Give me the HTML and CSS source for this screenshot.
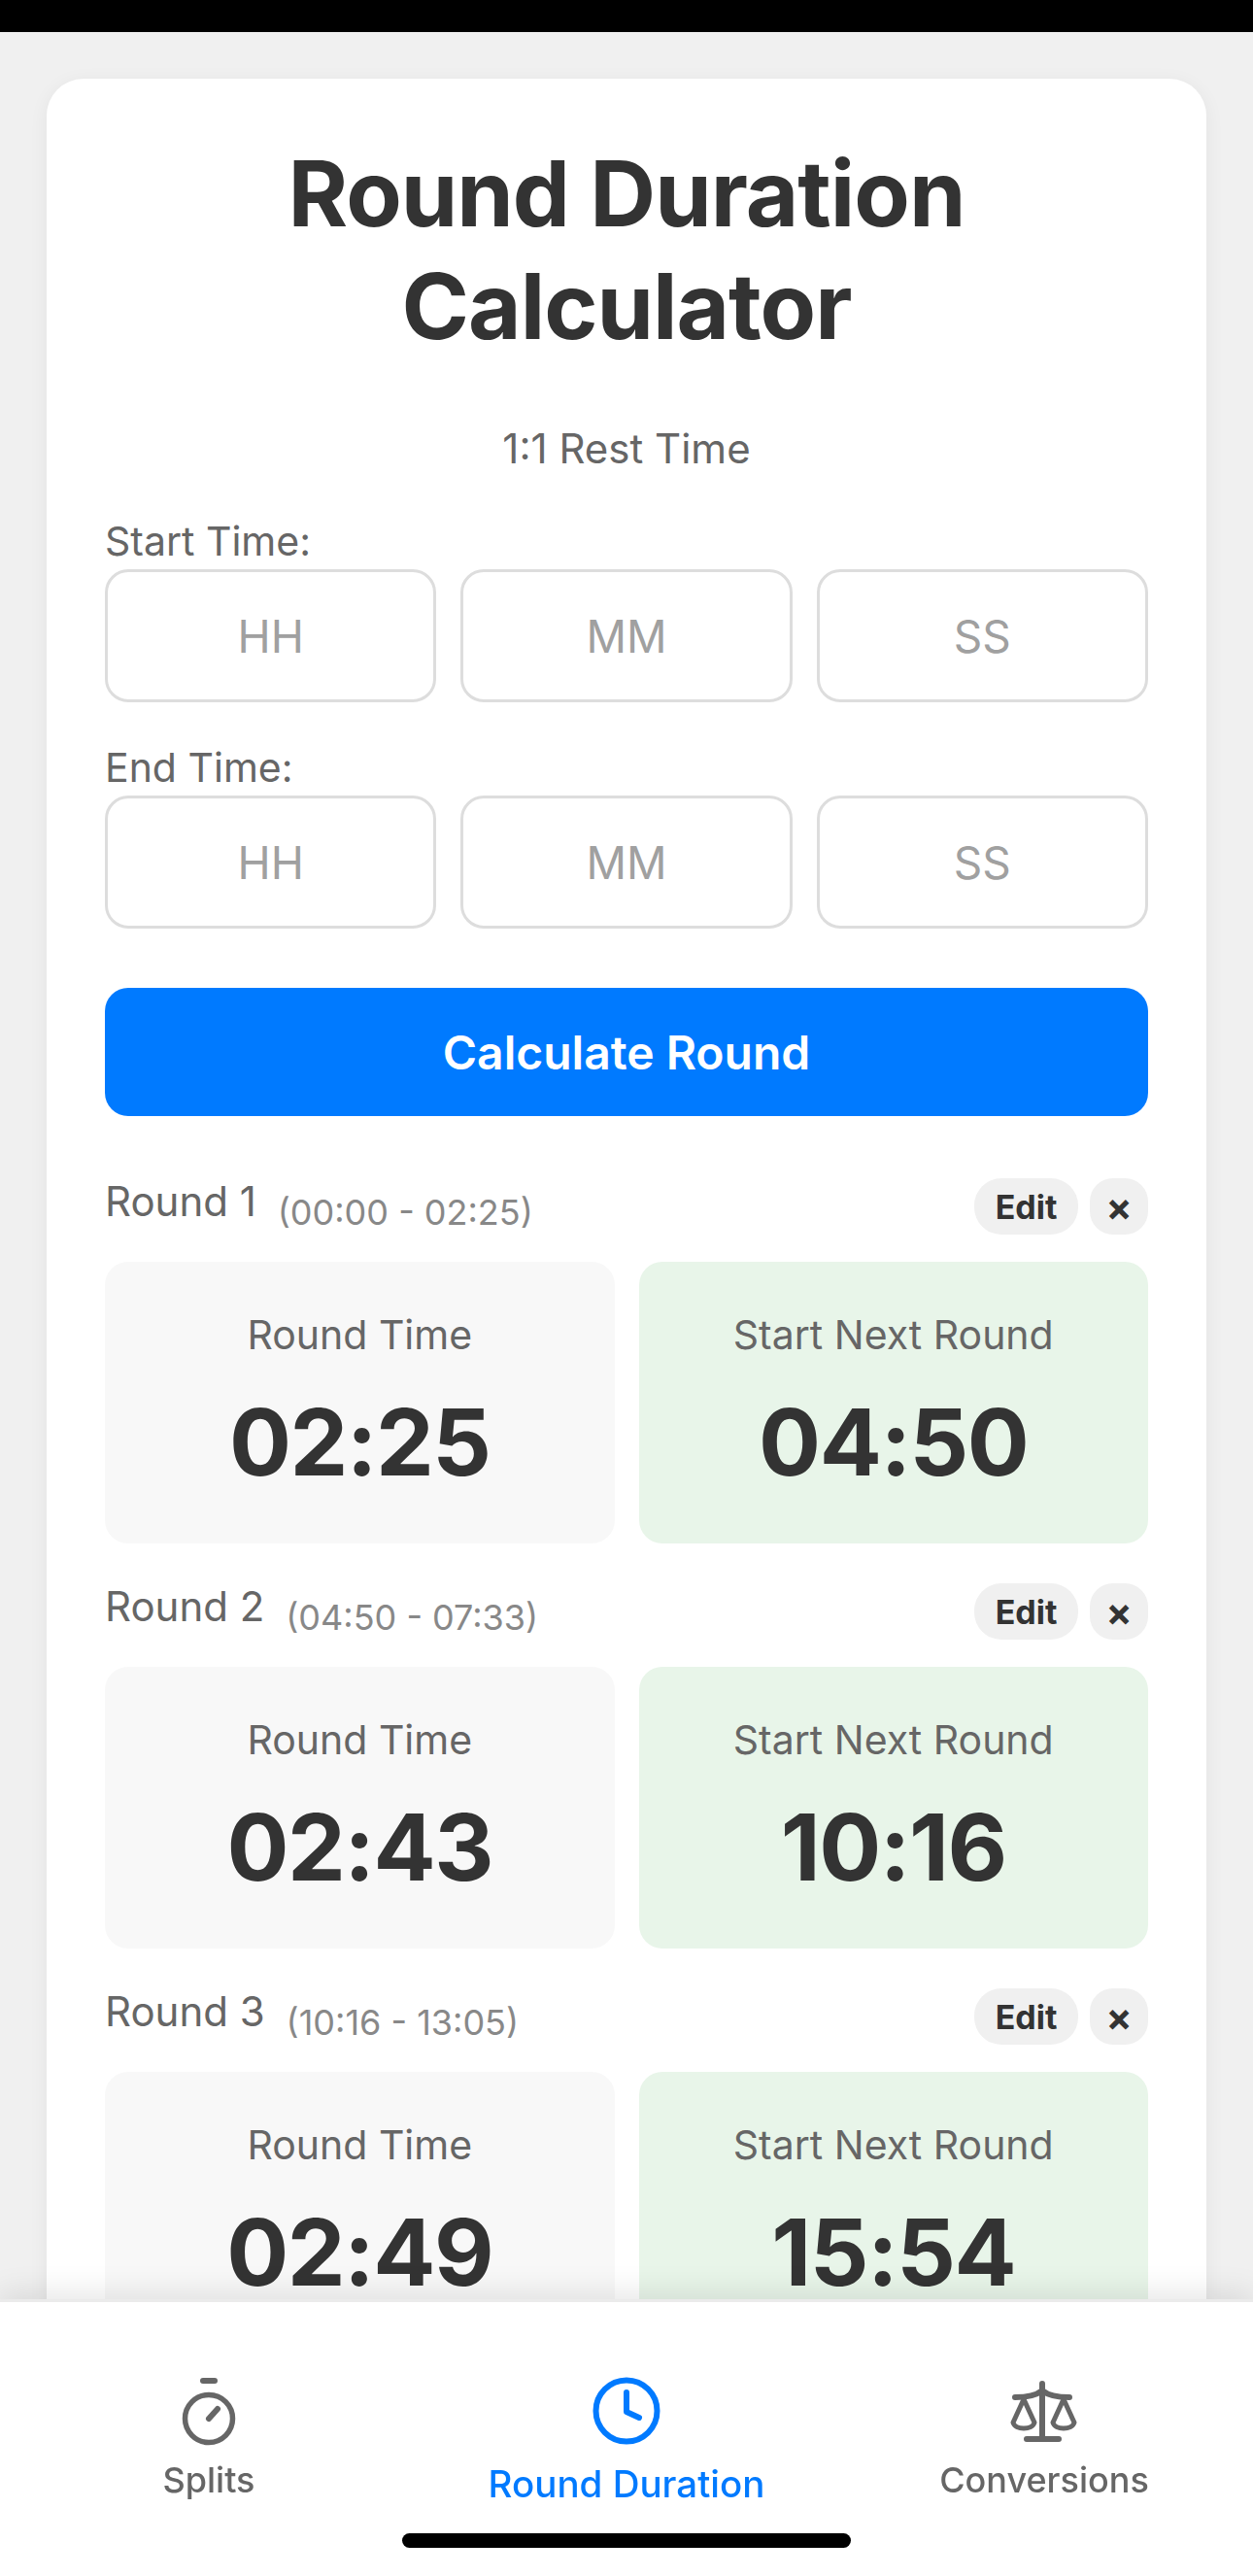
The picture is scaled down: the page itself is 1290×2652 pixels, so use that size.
FILE: index.html
```html
<!DOCTYPE html>
<html lang="en">
<head>
  <meta charset="UTF-8">
  <meta name="viewport" content="width=device-width, initial-scale=1.0">
  <title>Round Duration Calculator</title>
  <link rel="stylesheet" href="styles.css">
</head>
<body>
  <div class="status-bar"></div>

  <main class="card">
    <h1>Round Duration Calculator</h1>
    <p class="subtitle">1:1 Rest Time</p>

    <label class="field-label">Start Time:</label>
    <div class="time-inputs">
      <input type="text" placeholder="HH">
      <input type="text" placeholder="MM">
      <input type="text" placeholder="SS">
    </div>

    <label class="field-label">End Time:</label>
    <div class="time-inputs">
      <input type="text" placeholder="HH">
      <input type="text" placeholder="MM">
      <input type="text" placeholder="SS">
    </div>

    <button class="calculate-btn">Calculate Round</button>

    <section class="round">
      <div class="round-header">
        <div class="round-title">Round 1 <span class="round-range">(00:00 - 02:25)</span></div>
        <div class="round-actions">
          <button class="small-btn">Edit</button>
          <button class="small-btn close-btn">×</button>
        </div>
      </div>
      <div class="round-stats">
        <div class="stat">
          <div class="stat-label">Round Time</div>
          <div class="stat-value">02:25</div>
        </div>
        <div class="stat stat-next">
          <div class="stat-label">Start Next Round</div>
          <div class="stat-value">04:50</div>
        </div>
      </div>
    </section>

    <section class="round">
      <div class="round-header">
        <div class="round-title">Round 2 <span class="round-range">(04:50 - 07:33)</span></div>
        <div class="round-actions">
          <button class="small-btn">Edit</button>
          <button class="small-btn close-btn">×</button>
        </div>
      </div>
      <div class="round-stats">
        <div class="stat">
          <div class="stat-label">Round Time</div>
          <div class="stat-value">02:43</div>
        </div>
        <div class="stat stat-next">
          <div class="stat-label">Start Next Round</div>
          <div class="stat-value">10:16</div>
        </div>
      </div>
    </section>

    <section class="round">
      <div class="round-header">
        <div class="round-title">Round 3 <span class="round-range">(10:16 - 13:05)</span></div>
        <div class="round-actions">
          <button class="small-btn">Edit</button>
          <button class="small-btn close-btn">×</button>
        </div>
      </div>
      <div class="round-stats">
        <div class="stat">
          <div class="stat-label">Round Time</div>
          <div class="stat-value">02:49</div>
        </div>
        <div class="stat stat-next">
          <div class="stat-label">Start Next Round</div>
          <div class="stat-value">15:54</div>
        </div>
      </div>
    </section>
  </main>

  <nav class="tab-bar">
    <a class="tab">
      <svg class="tab-icon" width="80" height="76" viewBox="0 0 80 76" fill="none" stroke="currentColor" stroke-linecap="round">
        <path d="M34 6h12" stroke-width="6"/>
        <circle cx="40" cy="45" r="24.5" stroke-width="5.5"/>
        <path d="M40 45l9-10" stroke-width="6"/>
      </svg>
      <span>Splits</span>
    </a>
    <a class="tab tab-active">
      <svg class="tab-icon" width="80" height="79" viewBox="0 0 80 79" fill="none" stroke="currentColor" stroke-linecap="round" stroke-linejoin="round">
        <circle cx="40" cy="37" r="31.5" stroke-width="6"/>
        <path d="M40 18v20l13 6" stroke-width="6"/>
      </svg>
      <span>Round Duration</span>
    </a>
    <a class="tab">
      <svg class="tab-icon" width="80" height="76" viewBox="0 0 80 76" fill="none" stroke="currentColor" stroke-linecap="round" stroke-linejoin="round">
        <path d="M38 9v57M22 66h33" stroke-width="6"/>
        <path d="M10 23c12 0 22-2 28-7 6 5 16 7 28 7" stroke-width="6"/>
        <path d="M19 25L8 49c2 8 20 8 22 0z" stroke-width="5"/>
        <path d="M60 25L49 49c2 8 20 8 22 0z" stroke-width="5"/>
      </svg>
      <span>Conversions</span>
    </a>
    <div class="home-indicator"></div>
  </nav>
</body>
</html>
```

FILE: styles.css
```css
/* Basic styling */
* {
  box-sizing: border-box;
}
html, body {
  height: 2652px;
  overflow: hidden;
}
body {
  margin: 0;
  font-family: Inter, "Noto Sans", sans-serif;
  background: #f0f0f0;
  color: #333;
}
.status-bar {
  height: 33px;
  background: #000;
}

/* Card */
.card {
  margin: 48px 48px 0;
  padding: 60px 60px 0;
  background: #fff;
  border-radius: 38px;
  box-shadow: 0 4px 20px rgba(0, 0, 0, 0.06);
}
h1 {
  margin: 0;
  font-size: 94px;
  line-height: 116px;
  font-weight: 700;
  text-align: center;
  letter-spacing: -1px;
}
.subtitle {
  margin: 64px 0 0;
  font-size: 42px;
  line-height: 50px;
  color: #666;
  text-align: center;
}
.field-label {
  display: block;
  margin-bottom: 4px;
  font-size: 41px;
  line-height: 50px;
  color: #666;
}
.subtitle + .field-label {
  margin-top: 45px;
}
.time-inputs {
  display: flex;
  gap: 25px;
  margin-bottom: 42px;
}
.time-inputs input {
  flex: 1;
  min-width: 0;
  height: 137px;
  padding: 0;
  font-family: inherit;
  font-size: 46px;
  text-align: center;
  background: #fff;
  border: 3px solid #ddd;
  border-radius: 24px;
}
.time-inputs input::placeholder {
  color: #a0a0a0;
}
.calculate-btn {
  display: block;
  width: 100%;
  height: 132px;
  margin-top: 61px;
  font-family: inherit;
  font-size: 48px;
  font-weight: 600;
  color: #fff;
  background: #007aff;
  border: 0;
  border-radius: 24px;
}

/* Rounds */
.round {
  height: 417px;
}
.calculate-btn + .round {
  margin-top: 64px;
}
.round-header {
  display: flex;
  justify-content: space-between;
  align-items: center;
  height: 58px;
  margin-bottom: 28px;
}
.round-title {
  margin-bottom: 12px;
  font-size: 42px;
  color: #666;
}
.round-range {
  margin-left: 10px;
  font-size: 36px;
  color: #888;
  position: relative;
  top: 9px;
}
.round-actions {
  display: flex;
  gap: 12px;
}
.small-btn {
  height: 58px;
  width: 107px;
  padding: 0;
  font-family: inherit;
  font-size: 34px;
  font-weight: 700;
  color: #333;
  background: #f0f0f0;
  border: 0;
  border-radius: 28px;
}
.close-btn {
  width: 60px;
  font-size: 40px;
  border-radius: 24px;
}
.round-stats {
  display: flex;
  gap: 25px;
}
.stat {
  flex: 1;
  height: 290px;
  padding-top: 52px;
  text-align: center;
  background: #f8f8f8;
  border-radius: 24px;
}
.stat-next {
  background: #e8f5e9;
}
.stat-label {
  font-size: 41px;
  line-height: 46px;
  color: #666;
}
.stat-value {
  margin-top: 32px;
  font-size: 95px;
  line-height: 112px;
  font-weight: 700;
  letter-spacing: -1.5px;
}

/* Tab bar */
.tab-bar {
  position: fixed;
  left: 0;
  right: 0;
  bottom: 0;
  height: 285px;
  display: flex;
  align-items: flex-start;
  padding-top: 75px;
  background: #fff;
  border-top: 3px solid #ebebeb;
  box-shadow: 0 -6px 30px rgba(0, 0, 0, 0.1);
}
.tab {
  flex: 1;
  display: flex;
  flex-direction: column;
  align-items: center;
  gap: 10px;
  font-size: 36px;
  font-weight: 500;
  color: #666;
}
.tab-active {
  font-size: 38.5px;
  color: #007aff;
}
.tab-icon {
  display: block;
}
.home-indicator {
  position: absolute;
  left: 414px;
  bottom: 29px;
  width: 462px;
  height: 15px;
  background: #000;
  border-radius: 8px;
}
```
